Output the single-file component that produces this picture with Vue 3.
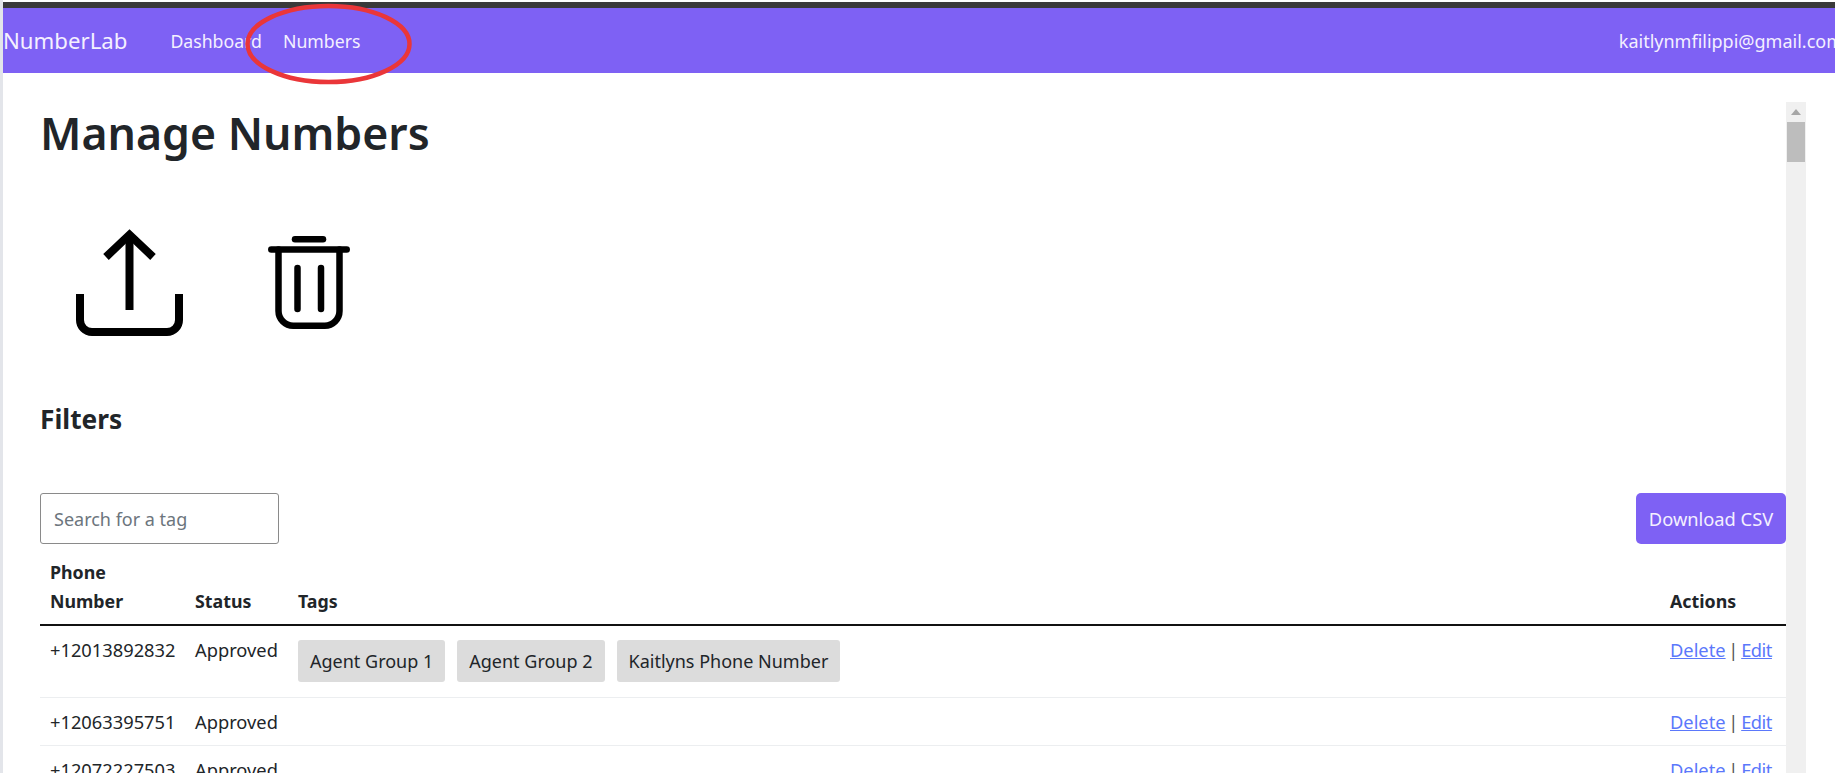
<script setup>
const rows = [
  { phone: '+12013892832', status: 'Approved', tags: ['Agent Group 1', 'Agent Group 2', 'Kaitlyns Phone Number'] },
  { phone: '+12063395751', status: 'Approved', tags: [] },
  { phone: '+12072227503', status: 'Approved', tags: [] },
]
</script>

<template>
  <div class="shot">
    <div class="topbar"></div>
    <nav class="nav">
      <span class="brand">NumberLab</span>
      <a class="nav-link">Dashboard</a>
      <a class="nav-link">Numbers</a>
      <span class="email">kaitlynmfilippi@gmail.com</span>
    </nav>
    <div class="body">
      <main class="content">
        <h1>Manage Numbers</h1>
        <div class="icons">
          <svg class="upload" width="107" height="107" viewBox="0 0 107 107" fill="none" stroke="#000" stroke-width="8">
            <path d="M53.5 8V81" />
            <path d="M30 28L53.5 5.7L77 28" />
            <path d="M4 65V91a12 12 0 0 0 12 12H91a12 12 0 0 0 12-12V65" />
          </svg>
          <svg class="trash" width="82" height="93" viewBox="0 0 82 93" fill="none" stroke="#000" stroke-width="6.5" stroke-linecap="round">
            <path d="M27 3.3H55" />
            <path d="M3.3 13.5H78.7" />
            <path d="M10.5 13.5V75a14.7 14.7 0 0 0 14.7 14.7H56.8A14.7 14.7 0 0 0 71.5 75V13.5" />
            <path d="M29.5 32V73" />
            <path d="M53 32V73" />
          </svg>
        </div>
        <h2>Filters</h2>
        <div class="toolbar">
          <input class="search" type="text" placeholder="Search for a tag" />
          <button class="download" type="button">Download CSV</button>
        </div>
        <table>
          <colgroup>
            <col class="c-phone" />
            <col class="c-status" />
            <col />
            <col class="c-actions" />
          </colgroup>
          <thead>
            <tr>
              <th>Phone Number</th>
              <th>Status</th>
              <th>Tags</th>
              <th>Actions</th>
            </tr>
          </thead>
          <tbody>
            <tr v-for="row in rows" :key="row.phone">
              <td>{{ row.phone }}</td>
              <td>{{ row.status }}</td>
              <td class="tags-cell">
                <span v-for="tag in row.tags" :key="tag" class="chip">{{ tag }}</span>
              </td>
              <td class="actions-cell"><a class="link">Delete</a> | <a class="link">Edit</a></td>
            </tr>
          </tbody>
        </table>
      </main>
      <aside class="scrollbar">
        <span class="arrow"></span>
        <span class="thumb"></span>
      </aside>
    </div>
    <svg class="annotation" width="173" height="88" viewBox="0 0 173 88" fill="none">
      <ellipse cx="86.5" cy="44" rx="81" ry="38" stroke="#ea3639" stroke-width="4.5" />
    </svg>
  </div>
</template>

<style>
html, body { margin: 0; background: #fff; overflow: hidden; }
</style>

<style scoped>
.shot {
  position: relative;
  width: 1835px;
  height: 773px;
  overflow: hidden;
  box-sizing: border-box;
  border-left: 3px solid #e3e5ea;
  background: #fff;
  font-family: "Noto Sans", "Open Sans", sans-serif;
  color: #212529;
  font-size: 18px;
}
.topbar {
  height: 6px;
  margin-top: 2px;
  background: #3a3a3a;
}
.nav {
  height: 65px;
  background: #7e61f4;
  color: #f4f0ff;
  display: flex;
  align-items: center;
  white-space: nowrap;
}
.brand { font-size: 22.2px; margin-right: 43px; }
.nav-link { font-size: 17.7px; margin-right: 21px; }
.email { font-size: 18px; margin-left: auto; margin-right: -8px; flex-shrink: 0; }
.body {
  display: flex;
  height: 700px;
  overflow: hidden;
}
.content {
  width: 1783px;
  box-sizing: border-box;
  padding-left: 37px;
  flex-shrink: 0;
}
h1 {
  margin: 33px 0 0;
  font-size: 44.6px;
  line-height: 54px;
  font-weight: 600;
}
.icons {
  display: flex;
  align-items: flex-start;
  margin-top: 69px;
}
.upload { margin-left: 36px; }
.trash { margin-left: 85px; margin-top: 7px; }
h2 {
  margin: 67px 0 0;
  font-size: 26.3px;
  line-height: 32px;
  font-weight: 700;
}
.toolbar {
  display: flex;
  justify-content: space-between;
  margin-top: 58px;
}
.search {
  width: 239px;
  height: 51px;
  box-sizing: border-box;
  border: 1px solid #8a8a8a;
  border-radius: 3px;
  padding: 0 13px;
  font: inherit;
  font-size: 18px;
  color: #212529;
  outline: none;
}
.search::placeholder { color: #6c757d; opacity: 1; }
.download {
  width: 150px;
  height: 51px;
  border: 0;
  border-radius: 5px;
  background: #7e61f4;
  color: #f4f0ff;
  font: inherit;
  font-size: 18.3px;
  padding: 0;
}
table {
  width: 100%;
  table-layout: fixed;
  border-collapse: collapse;
  margin-top: 12px;
}
.c-phone { width: 145px; }
.c-status { width: 103px; }
.c-actions { width: 126px; }
th {
  text-align: left;
  vertical-align: bottom;
  font-weight: 700;
  font-size: 17.8px;
  line-height: 29px;
  padding: 2px 10px 8px;
  border-bottom: 2px solid #111;
}
td {
  vertical-align: top;
  font-size: 18.3px;
  line-height: 28px;
  padding: 10px 10px 9px;
  border-bottom: 1px solid #eceef0;
  white-space: nowrap;
}
.tags-cell { padding-top: 14px; padding-bottom: 15px; font-size: 18px; }
.actions-cell { word-spacing: -2px; color: #555; }
.chip {
  display: inline-block;
  height: 42px;
  line-height: 43px;
  padding: 0 12px;
  margin-right: 12px;
  background: #dcdcdc;
  border-radius: 3px;
  color: #212529;
}
.link {
  color: #5b78fb;
  text-decoration: underline;
}
.link + .link { letter-spacing: -0.5px; }
.scrollbar {
  position: relative;
  width: 20px;
  margin-top: 29px;
  background: #f0f0f0;
  display: flex;
  flex-direction: column;
  align-items: center;
}
.arrow {
  margin-top: 7px;
  width: 0;
  height: 0;
  border-left: 5px solid transparent;
  border-right: 5px solid transparent;
  border-bottom: 6px solid #a6a6a6;
}
.thumb {
  margin-top: 7px;
  width: 18px;
  height: 40px;
  background: #bdbdbd;
}
.annotation {
  position: absolute;
  left: 239px;
  top: 0;
  pointer-events: none;
}
</style>
